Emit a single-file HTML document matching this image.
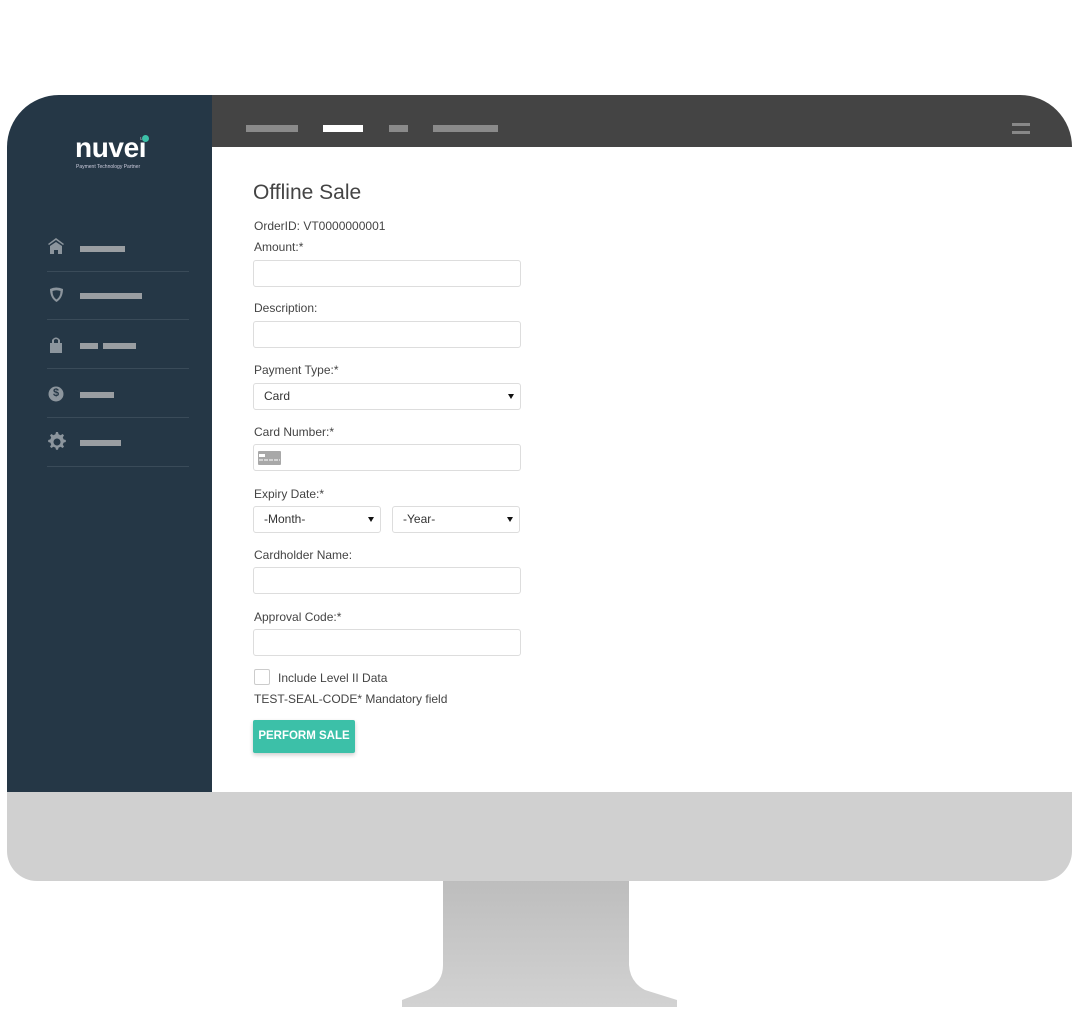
<!DOCTYPE html>
<html><head><style>
*{margin:0;padding:0;box-sizing:border-box}
body{width:1077px;height:1014px;background:#fff;position:relative;overflow:hidden;font-family:"Liberation Sans",Arial,sans-serif}
.a{position:absolute}
.lbl{position:absolute;left:254px;font-size:12px;color:#444;line-height:14px}
.inp{position:absolute;left:253px;width:268px;height:27px;border:1px solid #ddd;border-radius:3px;background:#fff}
.sel{font-size:12px;color:#333;line-height:25px;padding-left:10px}
.sel:after{content:"";position:absolute;right:6px;top:10px;border-left:3px solid transparent;border-right:3px solid transparent;border-top:5px solid #111}
.bar{position:absolute;height:6px;background:#9a9ea2}
.sep{position:absolute;left:47px;width:142px;height:1px;background:#3a4b59}
.tb{position:absolute;top:125px;height:7px;background:#8a8a8a}
</style></head><body>
<svg class="a" style="left:0;top:0" width="1077" height="1014">
<defs><linearGradient id="g" x1="0" y1="0" x2="0" y2="1"><stop offset="0" stop-color="#bdbdbd"/><stop offset="1" stop-color="#d2d2d2"/></linearGradient></defs>
<path d="M443 880 L629 880 L629 965 Q630 982 645 990 L677 1000 L677 1007 L402 1007 L402 1000 L428 990 Q443 982 443 965 Z" fill="url(#g)"/>
</svg>
<div class="a" style="left:7px;top:700px;width:1065px;height:181px;background:#d0d0d0;border-radius:0 0 30px 30px"></div>
<div class="a" style="left:7px;top:95px;width:1065px;height:697px;background:#fff;border-radius:52px 52px 0 0;overflow:hidden">
  <div class="a" style="left:0;top:0;width:205px;height:697px;background:#253746"></div>
  <div class="a" style="left:205px;top:0;width:860px;height:52px;background:#444"></div>
</div>
<div class="a" style="left:75px;top:133px;font-size:28px;font-weight:bold;color:#fff;letter-spacing:-0.4px;line-height:30px">nuvei</div>
<div class="a" style="left:141px;top:134px;width:8px;height:8px;border-radius:50%;background:#253746"></div>
<div class="a" style="left:142px;top:135px;width:7px;height:7px;border-radius:50%;background:#3cc0a8"></div>
<div class="a" style="left:76px;top:164px;font-size:5px;color:#ccd;white-space:nowrap">Payment Technology Partner</div>
<svg class="a" style="left:46px;top:236px" width="22" height="220" fill="#8c959d">
<path d="M2 8 L10 2 L18 8 L17 9 L10 4 L3 9Z"/><path d="M4 10 L10 6 L16 10 L16 18 L12 18 L12 14 L8 14 L8 18 L4 18Z"/>
<path d="M4 53 Q10 50 17 53 Q17 62 10.5 66 Q4 62 4 53Z M6.5 55 Q6.5 61 10.5 63.5 Q14.5 61 14.5 55 Q10.5 53.5 6.5 55Z" fill-rule="evenodd"/>
<path d="M4 107 L16 107 L16 117 L4 117Z M6 107 L6 104 Q10 99 14 104 L14 107 L12 107 L12 104 Q10 102 8 104 L8 107Z"/>
<circle cx="10" cy="158" r="7.5"/>
<path d="M10 196 l2 0 l0.6 2.2 l2 1 l2-1.2 l1.4 1.4 l-1.2 2 l0.8 2 l2.2 0.6 l0 2 l-2.2 0.6 l-0.8 2 l1.2 2 l-1.4 1.4 l-2-1.2 l-2 0.8 l-0.6 2.2 l-2 0 l-0.6-2.2 l-2-0.8 l-2 1.2 l-1.4-1.4 l1.2-2 l-0.8-2 l-2.2-0.6 l0-2 l2.2-0.6 l0.8-2 l-1.2-2 l1.4-1.4 l2 1.2 l2-1 Z M11 202.5 a3.5 3.5 0 1 0 0.01 0Z" fill-rule="evenodd"/>
</svg>
<div class="a" style="left:53px;font-size:11px;font-weight:bold;color:#253746;top:387px">$</div>
<div class="bar" style="left:80px;top:246px;width:45px"></div>
<div class="bar" style="left:80px;top:293px;width:62px"></div>
<div class="bar" style="left:80px;top:343px;width:18px"></div>
<div class="bar" style="left:103px;top:343px;width:33px"></div>
<div class="bar" style="left:80px;top:392px;width:34px"></div>
<div class="bar" style="left:80px;top:440px;width:41px"></div>
<div class="sep" style="top:271px"></div><div class="sep" style="top:319px"></div><div class="sep" style="top:368px"></div><div class="sep" style="top:417px"></div><div class="sep" style="top:466px"></div>
<div class="tb" style="left:246px;width:52px"></div>
<div class="tb" style="left:323px;width:40px;background:#fff"></div>
<div class="tb" style="left:389px;width:19px"></div>
<div class="tb" style="left:433px;width:65px"></div>
<div class="a" style="left:1012px;top:123px;width:18px;height:3px;background:#888"></div>
<div class="a" style="left:1012px;top:131px;width:18px;height:3px;background:#888"></div>
<div class="a" style="left:253px;top:181px;font-size:21px;color:#444;font-weight:300;line-height:24px">Offline Sale</div>
<div class="lbl" style="top:219px">OrderID: VT0000000001</div>
<div class="lbl" style="top:240px">Amount:*</div>
<div class="inp" style="top:260px"></div>
<div class="lbl" style="top:301px">Description:</div>
<div class="inp" style="top:321px"></div>
<div class="lbl" style="top:363px">Payment Type:*</div>
<div class="inp sel" style="top:383px">Card</div>
<div class="lbl" style="top:425px">Card Number:*</div>
<div class="inp" style="top:444px"><svg class="a" style="left:4px;top:6px" width="23" height="14"><rect width="23" height="14" rx="1" fill="#a8a8a8"/><rect x="1" y="3" width="6" height="3" fill="#fff"/><path d="M1 9h21" stroke="#fff" stroke-dasharray="4 1" stroke-width="1"/></svg></div>
<div class="lbl" style="top:487px">Expiry Date:*</div>
<div class="inp sel" style="top:506px;width:128px">-Month-</div>
<div class="inp sel" style="top:506px;left:392px;width:128px">-Year-</div>
<div class="lbl" style="top:548px">Cardholder Name:</div>
<div class="inp" style="top:567px"></div>
<div class="lbl" style="top:610px">Approval Code:*</div>
<div class="inp" style="top:629px"></div>
<div class="a" style="left:254px;top:669px;width:16px;height:16px;border:1px solid #ccc;border-radius:2px"></div>
<div class="lbl" style="top:671px;left:278px">Include Level II Data</div>
<div class="lbl" style="top:692px">TEST-SEAL-CODE* Mandatory field</div>
<div class="a" style="left:253px;top:720px;width:102px;height:33px;background:#3cc0a8;border-radius:2px;box-shadow:0 2px 4px rgba(0,0,0,.2);color:#fff;font-size:11.5px;font-weight:bold;text-align:center;line-height:33px">PERFORM SALE</div>
</body></html>
